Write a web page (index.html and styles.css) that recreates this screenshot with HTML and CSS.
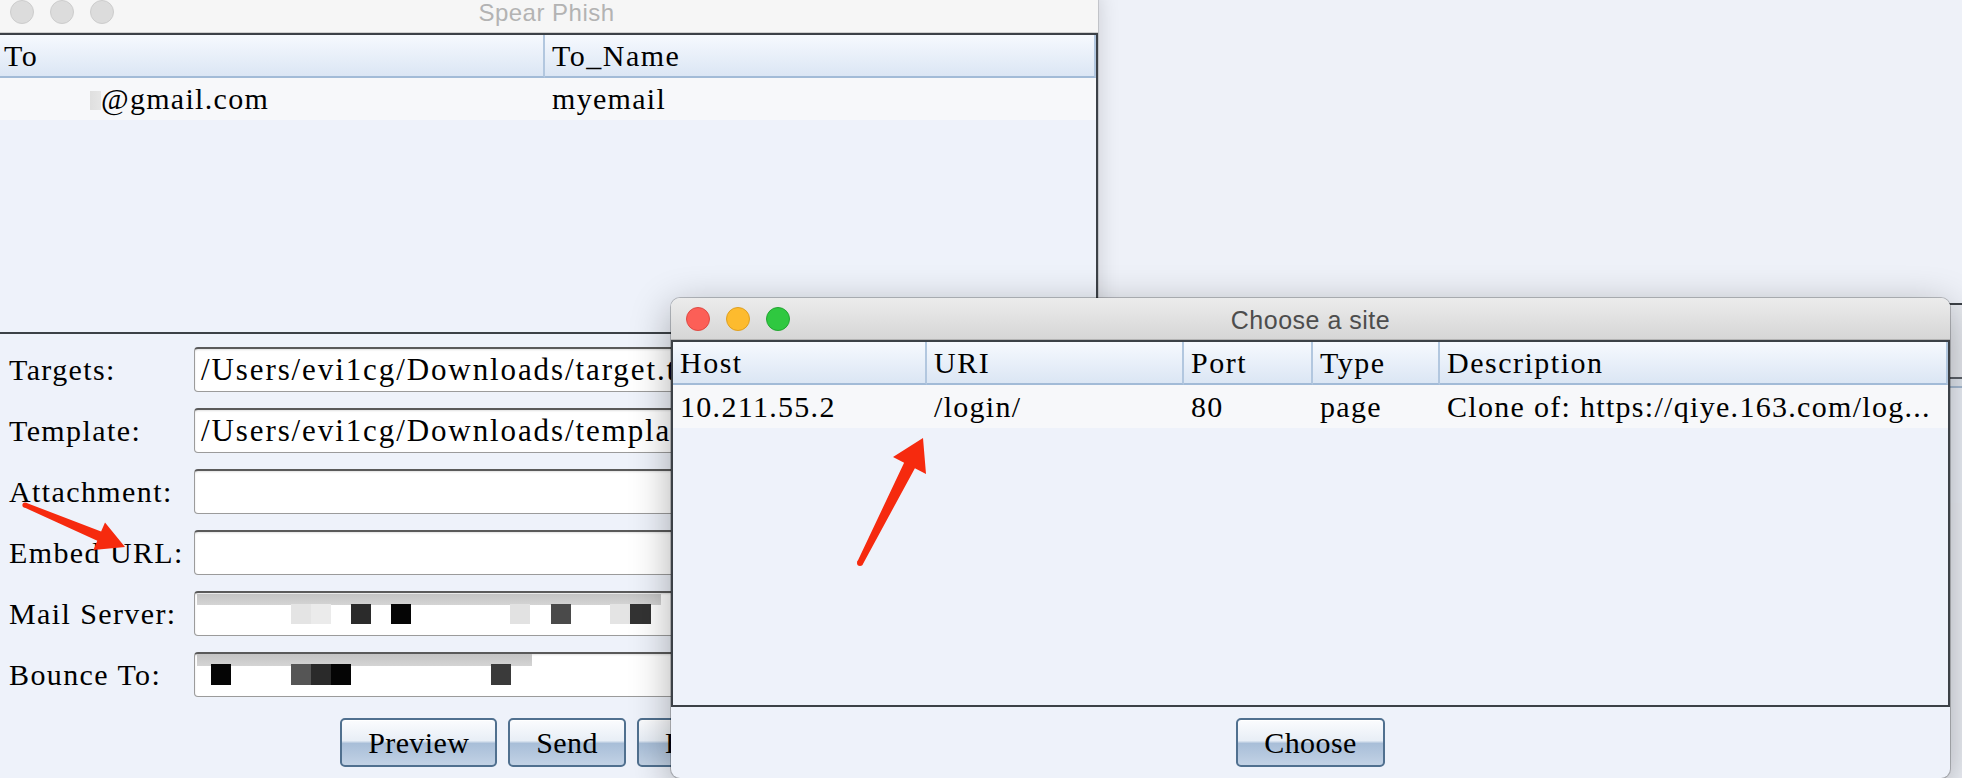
FILE: index.html
```html
<!DOCTYPE html>
<html>
<head>
<meta charset="utf-8">
<title>Spear Phish</title>
<link rel="stylesheet" href="styles.css">
</head>
<body>
<div class="desktop">
  <div class="bgwin"></div>

  <section class="window main-win">
    <header class="titlebar inactive">
      <div class="lights"><span class="light"></span><span class="light"></span><span class="light"></span></div>
      <div class="title">Spear Phish</div>
    </header>
    <div class="pane pane-main">
      <div class="table cols-main">
        <div class="th">To</div>
        <div class="th">To_Name</div>
        <div class="td"><span class="smudge"></span>@gmail.com</div>
        <div class="td">myemail</div>
      </div>
    </div>
    <div class="form">
      <label class="lbl">Targets:</label>
      <div class="field">/Users/evi1cg/Downloads/target.txt</div>
      <label class="lbl">Template:</label>
      <div class="field">/Users/evi1cg/Downloads/template.msg</div>
      <label class="lbl">Attachment:</label>
      <div class="field"></div>
      <label class="lbl">Embed URL:</label>
      <div class="field"></div>
      <label class="lbl">Mail Server:</label>
      <div class="field"><span class="redact redact-mail"></span></div>
      <label class="lbl">Bounce To:</label>
      <div class="field"><span class="redact redact-bounce"></span></div>
    </div>
    <div class="btnrow">
      <button class="btn">Preview</button>
      <button class="btn">Send</button>
      <button class="btn">Help</button>
    </div>
  </section>

  <section class="window dialog">
    <header class="titlebar active">
      <div class="lights"><span class="light red"></span><span class="light yellow"></span><span class="light green"></span></div>
      <div class="title">Choose a site</div>
    </header>
    <div class="pane pane-dialog">
      <div class="table cols-dialog">
        <div class="th">Host</div>
        <div class="th">URI</div>
        <div class="th">Port</div>
        <div class="th">Type</div>
        <div class="th">Description</div>
        <div class="td">10.211.55.2</div>
        <div class="td">/login/</div>
        <div class="td">80</div>
        <div class="td">page</div>
        <div class="td">Clone of: https://qiye.163.com/log...</div>
      </div>
    </div>
    <div class="dlg-buttons">
      <button class="btn">Choose</button>
    </div>
  </section>

  <svg class="arrows" width="1962" height="778" viewBox="0 0 1962 778">
    <polygon class="arrow" points="26,502.7 101.1,531.6 105,522.4 125,547 93.4,550 97.3,540.8 24,507.3"/>
    <circle class="arrow" cx="25" cy="505" r="2.6"/>
    <polygon class="arrow" points="857.3,561.7 904.1,462.8 893,457 923,438 926,474 914.9,468.2 862.7,564.4"/>
    <circle class="arrow" cx="860" cy="563" r="3"/>
  </svg>
</div>
</body>
</html>
```

FILE: styles.css
```css
* { box-sizing: border-box; }

html, body {
  margin: 0;
  padding: 0;
}

body {
  width: 1962px;
  height: 778px;
  overflow: hidden;
  background: #eef1f8;
  font-family: "Liberation Serif", "Times New Roman", serif;
  color: #000;
}

.desktop {
  position: relative;
  width: 1962px;
  height: 778px;
  overflow: hidden;
  background: #eef1f8;
}

/* another window peeking out at the far right */
.bgwin {
  position: absolute;
  left: 1930px;
  top: 303px;
  width: 40px;
  height: 200px;
  border-top: 2px solid #3c4147;
  background: linear-gradient(#e8ebf1 0 72px, #5d636b 72px 74px, #e3e9f2 74px 81px, #a9bed6 81px 83px, #eef2fa 83px);
}

/* ---------- windows ---------- */
.window {
  position: absolute;
  display: flex;
  flex-direction: column;
  background: #eef2fa;
  overflow: hidden;
}

.main-win {
  left: -5px;
  top: -9px;
  width: 1103px;
  height: 830px;
  border-radius: 9px;
  box-shadow: 0 0 22px rgba(0, 0, 0, 0.16), 0 0 0 1px rgba(0, 0, 0, 0.12);
}

.dialog {
  left: 671px;
  top: 298px;
  width: 1279px;
  height: 480px;
  border-radius: 9px;
  box-shadow: 0 10px 40px rgba(0, 0, 0, 0.32), 0 0 0 1px rgba(0, 0, 0, 0.22);
}

.titlebar {
  position: relative;
  flex: none;
  height: 42px;
  display: flex;
  align-items: center;
  justify-content: center;
  border-bottom: 1px solid #cfcfcf;
}

.titlebar.inactive {
  background: #f6f6f6;
  padding-top: 3px;
}

.titlebar.active {
  background: linear-gradient(#ececec, #d6d6d6);
  border-bottom-color: #b3b3b3;
}

.title {
  font-family: "Liberation Sans", Arial, sans-serif;
  font-size: 25px;
  line-height: 26px;
  letter-spacing: 0.5px;
}

.inactive .title { color: #b3b3b3; font-size: 24px; }
.active .title { color: #4d4d4d; padding-top: 2px; }

.lights {
  position: absolute;
  left: 15px;
  top: 9px;
  display: flex;
  gap: 16px;
}

.light {
  width: 24px;
  height: 24px;
  border-radius: 50%;
  background: #dcdcdc;
  border: 1px solid #cdcdcd;
}

.light.red { background: #fc5f57; border-color: #de4a43; }
.light.yellow { background: #fdbb2e; border-color: #de9f20; }
.light.green { background: #2fc840; border-color: #23a532; }

/* ---------- tables ---------- */
.pane {
  flex: none;
  border: 2px solid #3c4147;
  background: #eef2fa;
  overflow: hidden;
}

.pane-main { height: 301px; }
.pane-dialog { height: 367px; }

.table {
  display: grid;
  align-content: start;
}

.cols-main { grid-template-columns: 548px 1fr; }
.cols-dialog { grid-template-columns: 254px 257px 129px 127px 1fr; }

.th {
  height: 43px;
  background: linear-gradient(#f6f9fe, #dbe6f4);
  border-bottom: 2px solid #a2bbd7;
  border-right: 2px solid #b2c7df;
  padding-left: 7px;
  font-size: 30px;
  line-height: 41px;
  letter-spacing: 1.5px;
  white-space: nowrap;
  overflow: hidden;
}

.td {
  height: 43px;
  background: #f7f8fa;
  padding-left: 7px;
  font-size: 30px;
  line-height: 43px;
  letter-spacing: 1.3px;
  white-space: nowrap;
  overflow: hidden;
}

.cols-main .td { height: 42px; line-height: 42px; }

.smudge {
  display: inline-block;
  width: 97px;
  height: 19px;
  vertical-align: -1px;
  background: linear-gradient(to right, transparent 86px, #dfdfdf 86px, #e6e6e6 97px);
}

/* ---------- form ---------- */
.form {
  display: grid;
  grid-template-columns: 185px 1fr;
  grid-auto-rows: 45px;
  row-gap: 16px;
  align-items: center;
  padding: 13px 6px 0 14px;
}

.lbl {
  font-size: 30px;
  letter-spacing: 1.4px;
  white-space: nowrap;
}

.field {
  position: relative;
  height: 45px;
  background: #fff;
  border: 1px solid #9b9b9b;
  border-top: 2px solid #5a5a5a;
  border-radius: 4px;
  box-shadow: inset 0 1px 2px rgba(0, 0, 0, 0.12);
  padding-left: 6px;
  font-size: 31px;
  line-height: 41px;
  letter-spacing: 1.9px;
  white-space: nowrap;
  overflow: hidden;
}

/* pixelated redaction over the private values */
.redact {
  position: absolute;
  inset: 0;
  background-repeat: no-repeat;
}

.redact-mail {
  background-image:
    linear-gradient(#333, #333),
    linear-gradient(#e4e4e4, #e4e4e4),
    linear-gradient(#4a4a4a, #4a4a4a),
    linear-gradient(#e2e2e2, #e2e2e2),
    linear-gradient(#050505, #050505),
    linear-gradient(#2b2b2b, #2b2b2b),
    linear-gradient(#ebebeb, #ebebeb),
    linear-gradient(#e4e4e4, #e4e4e4),
    linear-gradient(to bottom, #c4c4c4, #d4d4d4);
  background-size: 21px 20px, 20px 20px, 20px 20px, 20px 20px, 20px 20px, 20px 20px, 20px 20px, 20px 20px, 464px 11px;
  background-position: 435px 11px, 415px 11px, 356px 11px, 315px 11px, 196px 11px, 156px 11px, 116px 11px, 96px 11px, 2px 1px;
}

.redact-bounce {
  background-image:
    linear-gradient(#3a3a3a, #3a3a3a),
    linear-gradient(#050505, #050505),
    linear-gradient(#2a2a2a, #2a2a2a),
    linear-gradient(#555, #555),
    linear-gradient(#050505, #050505),
    linear-gradient(to bottom, #c4c4c4, #d4d4d4);
  background-size: 20px 21px, 20px 21px, 20px 21px, 20px 21px, 20px 21px, 335px 12px;
  background-position: 296px 10px, 136px 10px, 116px 10px, 96px 10px, 16px 10px, 2px 0;
}

/* ---------- buttons ---------- */
.btnrow {
  display: flex;
  justify-content: center;
  gap: 11px;
  margin-top: 21px;
}

.dlg-buttons {
  flex: 1;
  display: flex;
  justify-content: center;
  align-items: flex-start;
  padding-top: 11px;
}

.btn {
  height: 49px;
  padding: 0 26px;
  font-family: "Liberation Serif", "Times New Roman", serif;
  font-size: 30px;
  letter-spacing: 0.4px;
  line-height: 45px;
  color: #000;
  border: 2px solid #50708f;
  border-radius: 5px;
  background: linear-gradient(#fbfcfe 0%, #e8eef6 46%, #a8bed8 52%, #c2d2e5 100%);
  box-shadow: inset 0 1px 0 #ffffff;
}

/* ---------- annotation arrows ---------- */
.arrows {
  position: absolute;
  left: 0;
  top: 0;
  pointer-events: none;
}

.arrow {
  fill: #f62a0e;
}
```
